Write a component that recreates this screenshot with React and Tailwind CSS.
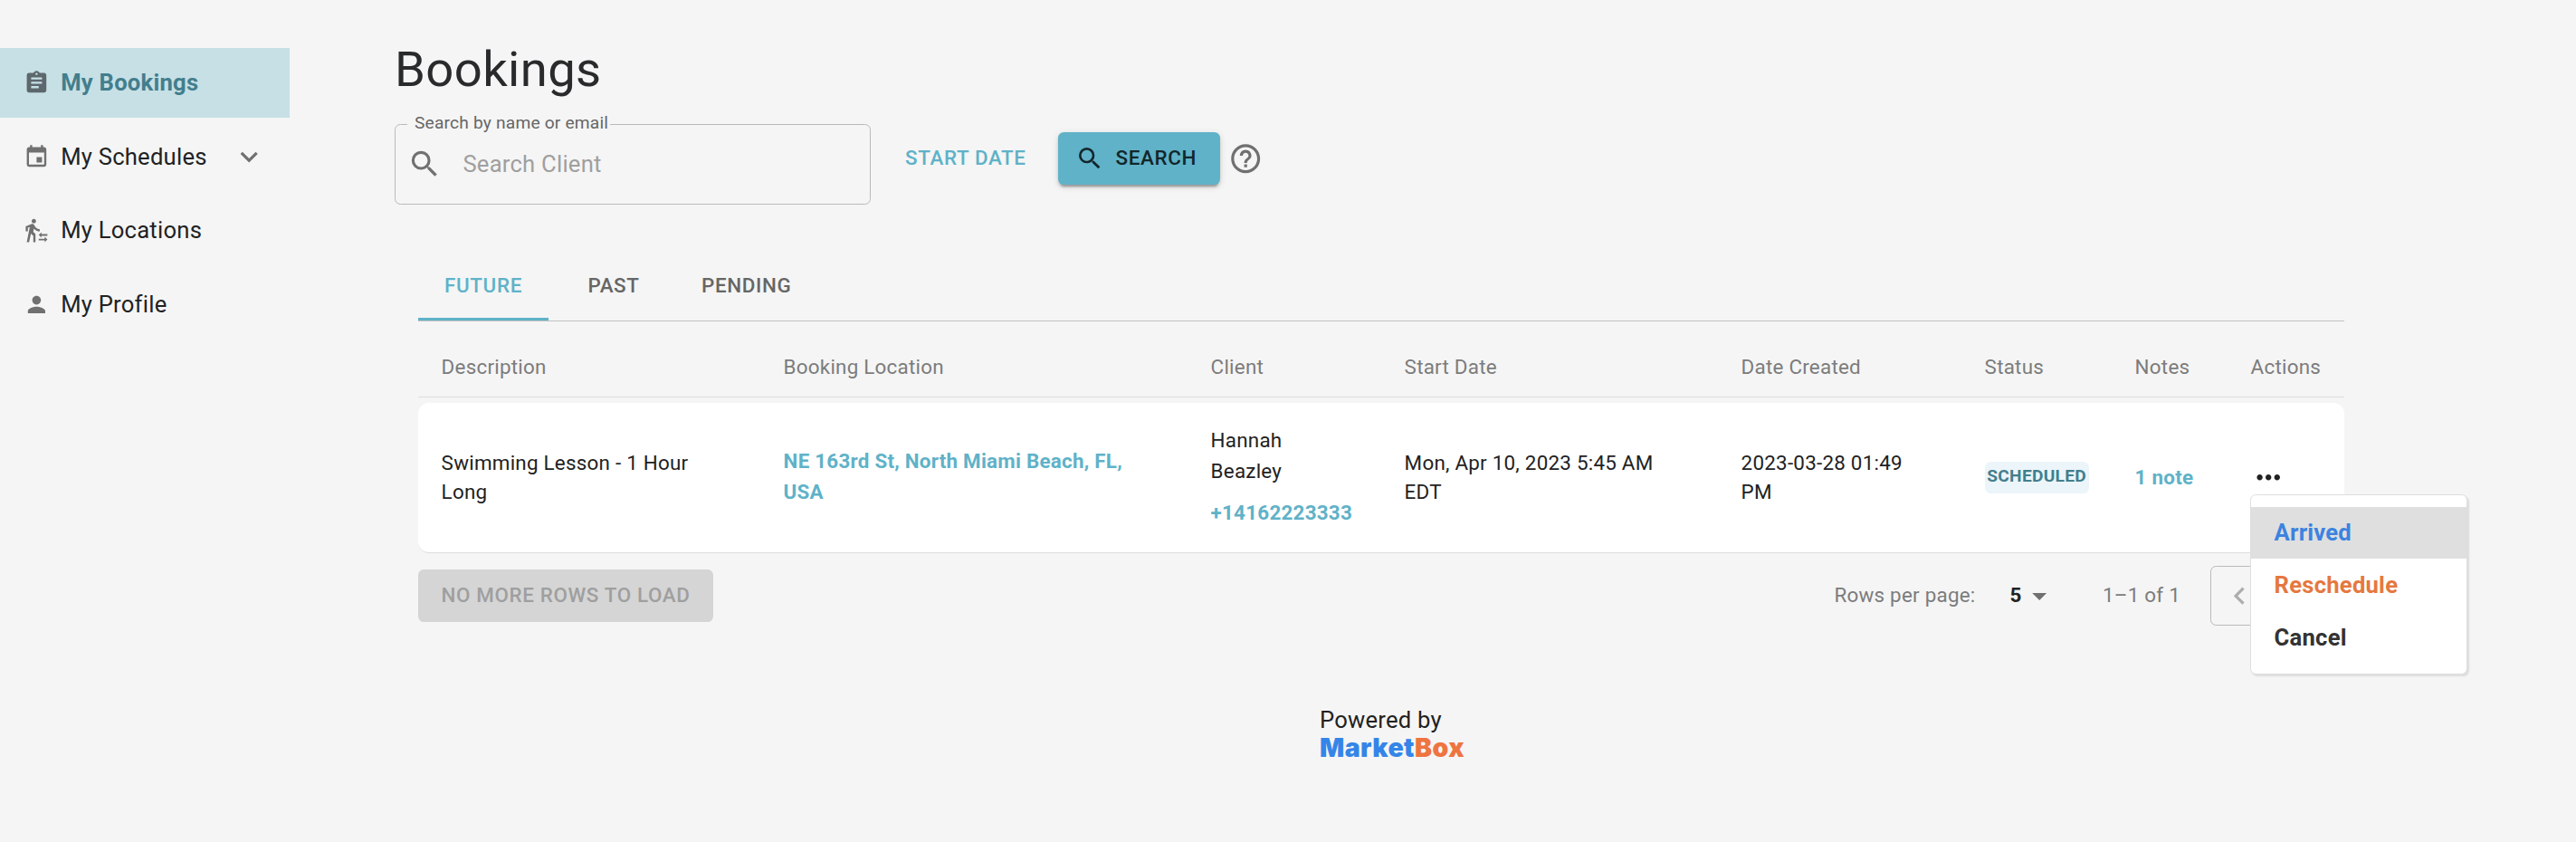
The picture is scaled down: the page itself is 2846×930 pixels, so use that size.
import { useState } from "react";
import {
  MdArrowDropDown,
  MdAssignment,
  MdChevronLeft,
  MdChevronRight,
  MdEvent,
  MdExpandMore,
  MdHelpOutline,
  MdMoreHoriz,
  MdPerson,
  MdSearch,
  MdTransferWithinAStation,
} from "react-icons/md";

const navItems = [
  { label: "My Bookings", icon: MdAssignment },
  { label: "My Schedules", icon: MdEvent, expandable: true },
  { label: "My Locations", icon: MdTransferWithinAStation },
  { label: "My Profile", icon: MdPerson },
];

const tabs = ["Future", "Past", "Pending"];

const columns = [
  "Description",
  "Booking Location",
  "Client",
  "Start Date",
  "Date Created",
  "Status",
  "Notes",
  "Actions",
];

const bookings = [
  {
    description: "Swimming Lesson - 1 Hour Long",
    location: "NE 163rd St, North Miami Beach, FL, USA",
    client: "Hannah Beazley",
    phone: "+14162223333",
    start: "Mon, Apr 10, 2023 5:45 AM EDT",
    created: "2023-03-28 01:49 PM",
    status: "SCHEDULED",
    notes: "1 note",
  },
];

const rowGrid =
  "grid grid-cols-[378px_472px_214px_372px_269px_166px_128px_1fr] pl-[25.6px]";

function Sidebar() {
  const [active, setActive] = useState("My Bookings");

  return (
    <nav className="flex w-[320px] shrink-0 flex-col gap-[4.8px] pt-[53px]">
      {navItems.map(({ label, icon: Icon, expandable }) => (
        <button
          key={label}
          onClick={() => setActive(label)}
          className={`flex h-[76.8px] items-center pl-[25.6px] text-[25.6px] tracking-[0.00938em] ${
            active === label
              ? "bg-[#c6e0e6] font-bold text-[#437e8c]"
              : "text-[#222]"
          }`}
        >
          <Icon
            className={`mr-[12.8px] size-[28.8px] ${
              active === label ? "text-[#5d686c]" : "text-[#707070]"
            }`}
          />
          {label}
          {expandable && (
            <MdExpandMore className="mr-[26px] ml-auto size-[38.4px] text-[#707070]" />
          )}
        </button>
      ))}
    </nav>
  );
}

function Filters() {
  return (
    <div className="mt-[27px] flex items-start">
      <div className="relative flex h-[89px] w-[526px] items-center rounded-[6.4px] border border-[#bababa] pl-[13px]">
        <label className="absolute -top-[14px] left-[13px] bg-[#f5f5f5] pr-[2px] pl-2 text-[19.2px] leading-[24px] tracking-[0.00938em] text-[#666]">
          Search by name or email
        </label>
        <MdSearch className="size-[38.4px] text-[#707070]" />
        <input
          placeholder="Search Client"
          className="ml-[23px] w-[400px] text-[25.6px] tracking-[0.00938em] outline-none placeholder:text-[#9f9f9f]"
        />
      </div>

      <button className="mt-[9px] ml-[38px] h-[58px] text-[22.4px] font-medium tracking-[0.02857em] text-[#5fb2c8]">
        START DATE
      </button>

      <button className="mt-[9px] ml-[35px] flex h-[58px] w-[179px] items-center rounded-[6.4px] bg-[#5fb2c8] pl-[19px] text-[22.4px] font-medium tracking-[0.02857em] text-[#13262b] shadow-[0_5px_2px_-3px_rgba(0,0,0,0.2),0_3px_3px_0_rgba(0,0,0,0.14),0_2px_8px_0_rgba(0,0,0,0.12)]">
        <MdSearch className="mr-[13px] size-8" />
        SEARCH
      </button>

      <MdHelpOutline className="mt-[19px] ml-[9px] size-[38.4px] text-[#707070]" />
    </div>
  );
}

function Tabs() {
  const [tab, setTab] = useState("Future");

  return (
    <div className="mt-[52px] flex h-[77px] border-b border-[#c2c2c2]">
      {tabs.map((name) => (
        <button
          key={name}
          onClick={() => setTab(name)}
          className={`h-[76px] min-w-[144px] border-b-[3px] px-[25px] pt-[3px] text-[22.4px] font-medium tracking-[0.02857em] uppercase ${
            tab === name
              ? "border-[#5fb2c8] text-[#5fb2c8]"
              : "border-transparent text-[#666]"
          }`}
        >
          {name}
        </button>
      ))}
    </div>
  );
}

function ActionsMenu() {
  return (
    <div className="absolute top-[38px] -left-px z-10 h-[199px] w-[240px] rounded-[6.4px] border border-[#dedede] bg-white pt-[13px] text-[25.6px] font-bold tracking-[0.00938em] shadow-[2px_2px_2px_rgba(0,0,0,0.1)]">
      <div className="flex h-[57px] items-center bg-[#dfdfdf] pl-[26px] text-[#3c83e0]">
        Arrived
      </div>
      <div className="flex h-[58px] items-center pl-[26px] text-[#e57840]">
        Reschedule
      </div>
      <div className="flex h-[58px] items-center pl-[26px] text-[#333]">
        Cancel
      </div>
    </div>
  );
}

function BookingRow({ booking }) {
  const [open, setOpen] = useState(true);

  return (
    <div
      className={`${rowGrid} mt-[6px] h-[166px] items-center rounded-xl border-b border-[#dcdcdc] bg-white pb-px text-[22.4px] leading-8 tracking-[0.01071em] text-[#222]`}
    >
      <div className="w-[300px]">{booking.description}</div>
      <div className="w-[400px] leading-[33.6px] font-bold text-[#5fb2c8]">
        {booking.location}
      </div>
      <div className="leading-[33.6px]">
        <div className="w-[120px]">{booking.client}</div>
        <div className="mt-[13px] font-bold text-[#5fb2c8]">
          {booking.phone}
        </div>
      </div>
      <div className="w-[300px]">{booking.start}</div>
      <div className="w-[200px]">{booking.created}</div>
      <div>
        <span className="flex h-[35px] w-[115px] items-center justify-center rounded-[6.4px] bg-[#ecf5fa] pb-[2px] text-[19.2px] font-bold text-[#437e8c]">
          {booking.status}
        </span>
      </div>
      <div className="font-bold text-[#5fb2c8]">{booking.notes}</div>
      <div className="relative">
        <button className="block" onClick={() => setOpen(!open)}>
          <MdMoreHoriz className="size-[38.4px]" />
        </button>
        {open && <ActionsMenu />}
      </div>
    </div>
  );
}

function Pagination() {
  return (
    <div className="mt-[14px] flex h-[66px] items-center text-[22.4px] tracking-[0.01071em] text-[#7c7c7c]">
      <button
        disabled
        className="h-[58px] w-[326px] rounded-[6.4px] bg-[#d5d5d5] font-medium tracking-[0.02857em] text-[#9f9f9f]"
      >
        NO MORE ROWS TO LOAD
      </button>

      <div className="ml-auto flex items-center">
        <span>Rows per page:</span>
        <span className="ml-[38px] font-bold text-[#222]">5</span>
        <MdArrowDropDown className="size-[38.4px] text-[#707070]" />
        <span className="ml-[51px]">1–1 of 1</span>
        <div className="ml-[33px] flex h-[66px] w-[148px] items-center justify-between rounded-[6.4px] border border-[#bababa] px-3 text-[#adadad]">
          <MdChevronLeft className="size-[38.4px]" />
          <MdChevronRight className="size-[38.4px]" />
        </div>
      </div>
    </div>
  );
}

export default function App() {
  return (
    <div className="flex h-[930px] w-[2846px] overflow-hidden bg-[#f5f5f5] font-['Roboto',sans-serif] text-[#222]">
      <Sidebar />

      <main className="ml-[116px] flex w-[2154px] flex-col pt-11">
        <h1 className="text-[54.4px] leading-[66px] tracking-[0.00735em] text-[#282a2b]">
          Bookings
        </h1>

        <Filters />

        <section className="ml-[26px]">
          <Tabs />

          <div
            className={`${rowGrid} h-[84px] items-center border-b border-[#dcdcdc] pt-[19px] text-[22.4px] tracking-[0.01071em] text-[#7c7c7c]`}
          >
            {columns.map((name) => (
              <div key={name}>{name}</div>
            ))}
          </div>

          {bookings.map((booking) => (
            <BookingRow key={booking.phone} booking={booking} />
          ))}

          <Pagination />
        </section>

        <footer className="mt-[85px] ml-[1022px]">
          <div className="text-[25.6px] leading-[38px] tracking-[0.00938em]">
            Powered by
          </div>
          <div className="font-['Inter',sans-serif] text-[28.5px] leading-[23px] font-black tracking-[0.015em] text-[#3585e8]">
            Market<span className="text-[#ee7440]">Box</span>
          </div>
        </footer>
      </main>
    </div>
  );
}
